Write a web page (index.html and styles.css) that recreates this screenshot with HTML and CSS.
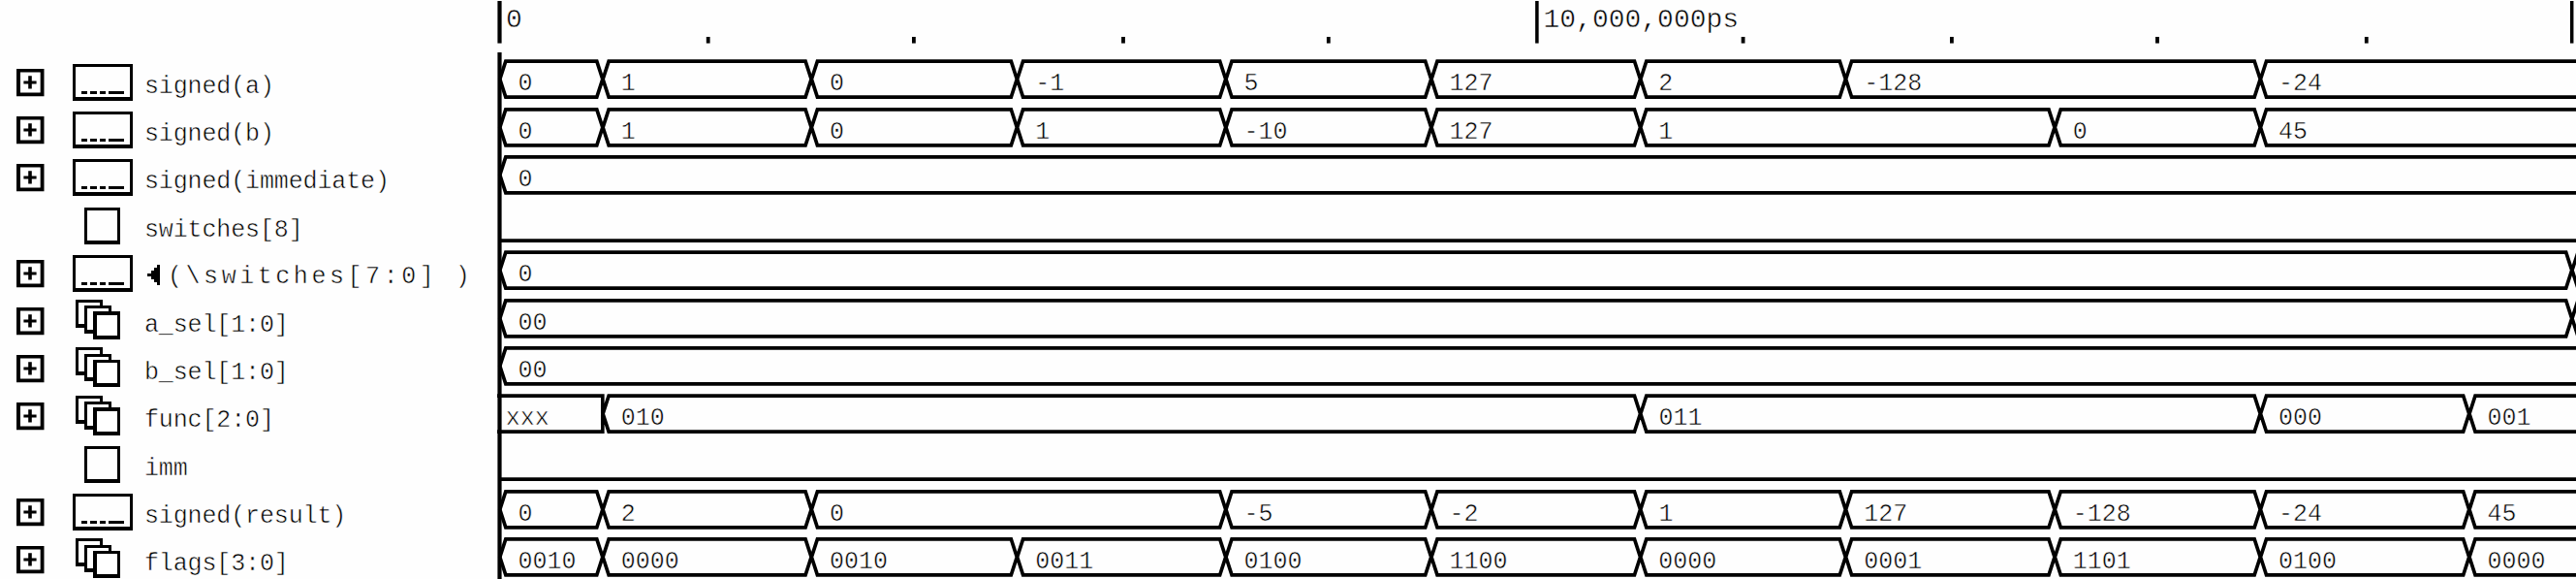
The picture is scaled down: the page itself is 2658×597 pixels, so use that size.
FILE: index.html
```html
<!DOCTYPE html>
<html lang="en">
<head>
<meta charset="utf-8">
<title>Waveform viewer</title>
<link rel="stylesheet" href="styles.css">
</head>
<body>
<svg class="defs" aria-hidden="true">
  <symbol id="expand" viewBox="0 0 29 29">
    <rect x="3" y="3" width="22.6" height="22" fill="#555"/>
    <path fill-rule="evenodd" d="M0 0H28.5V28.2H0ZM4 3.6V24.4H24.6V3.6Z"/>
    <rect x="4" y="3.6" width="20.6" height="20.8" fill="#fff"/>
    <path d="M12.2 7.3H15.8V12.4H20.6V15.6H15.8V20.6H12.2V15.6H7.4V12.4H12.2Z"/>
  </symbol>
  <symbol id="vector" viewBox="0 0 62 38">
    <path fill-rule="evenodd" d="M0 0H62V38H0ZM3 3V34H59V3Z"/>
    <path d="M9 28h6v3H9zM18 28h7v3h-7zM28 28h6v3h-6zM37 28h16v3H37z"/>
  </symbol>
  <symbol id="bit" viewBox="0 0 37 38">
    <path fill-rule="evenodd" d="M0 0H37V38H0ZM3 3V34H34V3Z"/>
  </symbol>
  <symbol id="bus" viewBox="0 0 46 41">
    <path d="M0 0H28V29H0Z"/><path fill="#fff" d="M3 3H25V25H3Z"/>
    <path d="M9 6H37V35H9Z"/><path fill="#fff" d="M12 9H34V31H12Z"/>
    <path d="M18 12H46V41H18Z"/><path fill="#fff" d="M22 16H43V37H22Z"/>
  </symbol>
  <symbol id="bus-low" viewBox="0 0 46 41">
    <path d="M0 0H28V29H0Z"/><path fill="#fff" d="M3 3H25V25H3Z"/>
    <path d="M9 7H37V35H9Z"/><path fill="#fff" d="M12 10H34V31H12Z"/>
    <path d="M18 13H46V41H18Z"/><path fill="#fff" d="M22 16H43V37H22Z"/>
  </symbol>
  <symbol id="arrow" viewBox="0 0 13 21">
    <path d="M10 0H13V21H10V18H7V15H4V12H0V9H4V6H7V3H10Z"/>
  </symbol>
</svg>
<main class="viewer">
  <header class="ruler">
    <svg class="ticks" id="ticks" width="2658" height="54"></svg>
    <span class="time time-start">0</span>
    <span class="time time-mid">10,000,000ps</span>
  </header>
  <section class="signals" id="signals"></section>
</main>
<script src="script.js"></script>
</body>
</html>
```
FILE: styles.css
```css
* { box-sizing: border-box; }

body {
  margin: 0;
  background: #fefefe;
  color: #000;
  font-family: "Liberation Mono", "Courier New", monospace;
  overflow: hidden;
}

.defs { position: absolute; width: 0; height: 0; }

.viewer {
  width: 2658px;
  height: 597px;
  overflow: hidden;
}

.ruler {
  position: relative;
  display: flex;
  height: 60px;
  padding-left: 522px;
}

.ticks { position: absolute; left: 0; top: 0; height: 60px; }

/* Thin the glyph stems so the labels read lighter than the traces. */
.time, .name span, .value { -webkit-text-stroke: 0.5px #fefefe; }

.time {
  font-size: 28px;
  line-height: 32px;
  padding-top: 5px;
  white-space: pre;
}

.time-start { width: 1070.5px; }

.signal {
  display: grid;
  grid-template-columns: 75px 74px 364px 1fr;
  height: 49px;
}

.signal.tall { height: 50px; }

.signal svg { display: block; fill: #000; }

.expander { padding: 11px 0 0 17px; }
.expander svg { width: 29px; height: 29px; }

.icon-vector { width: 62px; height: 38px; margin-top: 6px; }
.icon-bit { width: 37px; height: 38px; margin: 6px 0 0 12px; }
.icon-bus { width: 46px; height: 41px; margin: 3px 0 0 3px; }
.icon-bus.low-1 { margin-top: 4px; }

.name {
  display: flex;
  font-size: 25px;
  line-height: 30px;
  padding-top: 15px;
  letter-spacing: -0.13px;
  white-space: pre;
}

.name.linked { letter-spacing: 3.55px; padding-top: 14px; }
.name.linked svg { width: 13px; height: 21px; margin: 2px 8px 0 3px; }

.wave { position: relative; }

.wave .trace {
  position: absolute;
  left: 0;
  top: 0;
  fill: none;
  stroke: #000;
  stroke-width: 3.65;
  overflow: visible;
}

.values {
  position: relative;
  display: flex;
  padding-left: 2.5px;
  font-size: 25px;
  line-height: 30px;
}

.value {
  flex: none;
  padding: 13px 0 0 18.9px;
  white-space: pre;
}

.value.unknown { padding-left: 6.3px; }
.raised .value { padding-top: 12px; }
```
FILE: script.js
```js
const START = 515.5;
const PANEL = 513;
const END = 2670;
// Clock edges at which values may change.
const T = [START, 621.8, 837.1, 1049.3, 1264.7, 1476.7, 1692.5, 1904.3, 2120, 2332.2, 2547.7, 2653.7];

// Each value is [edge index, text].
const signals = [
  { name: "signed(a)", icon: "vector", top: 3.17, raised: true, values: [[0, "0"], [1, "1"], [2, "0"], [3, "-1"], [4, "5"], [5, "127"], [6, "2"], [7, "-128"], [9, "-24"]] },
  { name: "signed(b)", icon: "vector", top: 3.83, values: [[0, "0"], [1, "1"], [2, "0"], [3, "1"], [4, "-10"], [5, "127"], [6, "1"], [8, "0"], [9, "45"]] },
  { name: "signed(immediate)", icon: "vector", top: 3.83, tall: true, values: [[0, "0"]] },
  { name: "switches[8]", icon: "bit" },
  { name: "(\\switches[7:0] )", icon: "vector", top: 3.17, raised: true, linked: true, values: [[0, "0"], [11, ""]] },
  { name: "a_sel[1:0]", icon: "bus", top: 3.83, values: [[0, "00"], [11, ""]] },
  { name: "b_sel[1:0]", icon: "bus-low", top: 3.83, values: [[0, "00"]] },
  { name: "func[2:0]", icon: "bus", low: true, tall: true, top: 4.17, values: [[0, "xxx"], [1, "010"], [6, "011"], [9, "000"], [10, "001"]] },
  { name: "imm", icon: "bit" },
  { name: "signed(result)", icon: "vector", top: 3.83, values: [[0, "0"], [1, "2"], [2, "0"], [4, "-5"], [5, "-2"], [6, "1"], [7, "127"], [8, "-128"], [9, "-24"], [10, "45"]] },
  { name: "flags[3:0]", icon: "bus-low", top: 3.83, values: [[0, "0010"], [1, "0000"], [2, "0010"], [3, "0011"], [4, "0100"], [5, "1100"], [6, "0000"], [7, "0001"], [8, "1101"], [9, "0100"], [10, "0000"]] },
];

function tracePath(signal) {
  if (!signal.values) return "M2 40.17H" + (END - PANEL);
  const top = signal.top;
  const bottom = top + 37;
  const middle = (top + bottom) / 2;
  return signal.values.map(([edge, text], i) => {
    const next = signal.values[i + 1];
    const from = T[edge] - PANEL;
    const to = (next ? T[next[0]] : END) - PANEL;
    if (text === "xxx") return `M0 ${top}H${to}V${bottom}H0`;
    return `M${to} ${middle}L${to - 6} ${top}H${from + 6.3}L${from + 0.3} ${middle}L${from + 6.3} ${bottom}H${to - 6}L${to} ${middle}`;
  }).join("");
}

function valueCells(signal) {
  return (signal.values || []).map(([edge, text], i) => {
    const next = signal.values[i + 1];
    const width = (next ? T[next[0]] : 2658) - T[edge];
    return `<span class="value${text === "xxx" ? " unknown" : ""}" style="width:${width.toFixed(1)}px">${text}</span>`;
  }).join("");
}

document.getElementById("signals").innerHTML = signals.map((s) => `
  <div class="signal${s.tall ? " tall" : ""}">
    <div class="expander">${s.icon === "bit" ? "" : '<svg><use href="#expand"/></svg>'}</div>
    <div class="type"><svg class="icon-${s.icon.split("-")[0]}${s.low ? " low-1" : ""}"><use href="#${s.icon}"/></svg></div>
    <div class="name${s.linked ? " linked" : ""}">${s.linked ? '<svg><use href="#arrow"/></svg>' : ""}<span>${s.name}</span></div>
    <div class="wave${s.raised ? " raised" : ""}">
      <svg class="trace" width="2145" height="49"><path d="${tracePath(s)}"/></svg>
      <div class="values">${valueCells(s)}</div>
    </div>
  </div>`).join("");

const minor = [730.7, 942.9, 1159, 1370.8, 1798.6, 2013.9, 2226, 2441.8];
const major = [[START, 4.2], [1585.9, 3.5], [2653.7, 3.5]];
document.getElementById("ticks").innerHTML =
  major.map(([x, w]) => `<rect x="${x - w / 2}" y="1" width="${w}" height="43.6"/>`).join("") +
  minor.map((x) => `<rect x="${x - 1.9}" y="38" width="3.8" height="6.6"/>`).join("") +
  `<rect x="513.4" y="54" width="4.2" height="543"/>`;
document.getElementById("ticks").style.overflow = "visible";
```
